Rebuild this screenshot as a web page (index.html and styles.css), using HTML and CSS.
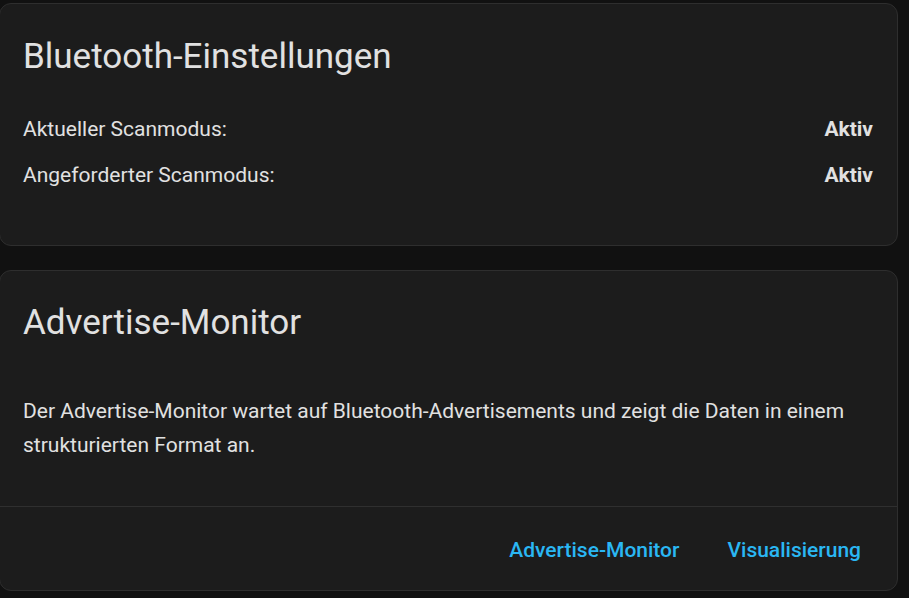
FILE: index.html
```html
<!DOCTYPE html>
<html lang="de">
<head>
<meta charset="utf-8">
<title>Bluetooth</title>
<link rel="stylesheet" href="styles.css">
</head>
<body>
<div class="page">
  <section class="card settings">
    <h1 class="card-title">Bluetooth-Einstellungen</h1>
    <div class="rows">
      <div class="row"><span>Aktueller Scanmodus:</span><span class="value">Aktiv</span></div>
      <div class="row"><span>Angeforderter Scanmodus:</span><span class="value">Aktiv</span></div>
    </div>
  </section>
  <section class="card monitor">
    <h1 class="card-title">Advertise-Monitor</h1>
    <p class="desc">Der Advertise-Monitor wartet auf Bluetooth-Advertisements und zeigt die Daten in einem strukturierten Format an.</p>
    <div class="actions">
      <button class="btn">Advertise-Monitor</button>
      <button class="btn">Visualisierung</button>
    </div>
  </section>
</div>
</body>
</html>
```
FILE: styles.css
```css
html, body {
  margin: 0;
  padding: 0;
  background: #111111;
}
body {
  font-family: Roboto, "Noto Sans", sans-serif;
  color: #e1e1e1;
}
.page {
  display: flex;
  flex-direction: column;
  gap: 24px;
  margin-left: -1px;
  padding: 3px 11px 0 0;
}
.card {
  background: #1c1c1c;
  border: 1px solid #2e2e2e;
  border-radius: 12px;
}
.card-title {
  margin: 0;
  font-size: 35px;
  font-weight: 400;
  line-height: 46px;
  padding: 30px 23px 0;
}
.rows {
  padding: 26px 24px 47px 23px;
}
.row {
  display: flex;
  justify-content: space-between;
  font-size: 21px;
  line-height: 46px;
}
.value {
  font-weight: 700;
}
.monitor .card-title {
  padding-top: 29px;
}
.desc {
  margin: 0;
  padding: 48px 23px 44px;
  font-size: 21px;
  line-height: 34px;
}
.actions {
  border-top: 1px solid #2f2f2f;
  display: flex;
  justify-content: flex-end;
  gap: 24px;
  padding: 2px 24px 0 0;
  height: 84px;
  box-sizing: border-box;
  align-items: center;
}
.btn {
  background: none;
  border: none;
  font-family: Roboto, "Noto Sans", sans-serif;
  font-size: 21px;
  font-weight: 500;
  color: #2ab7f3;
  padding: 0 12px;
  line-height: 46px;
  cursor: pointer;
}
```
